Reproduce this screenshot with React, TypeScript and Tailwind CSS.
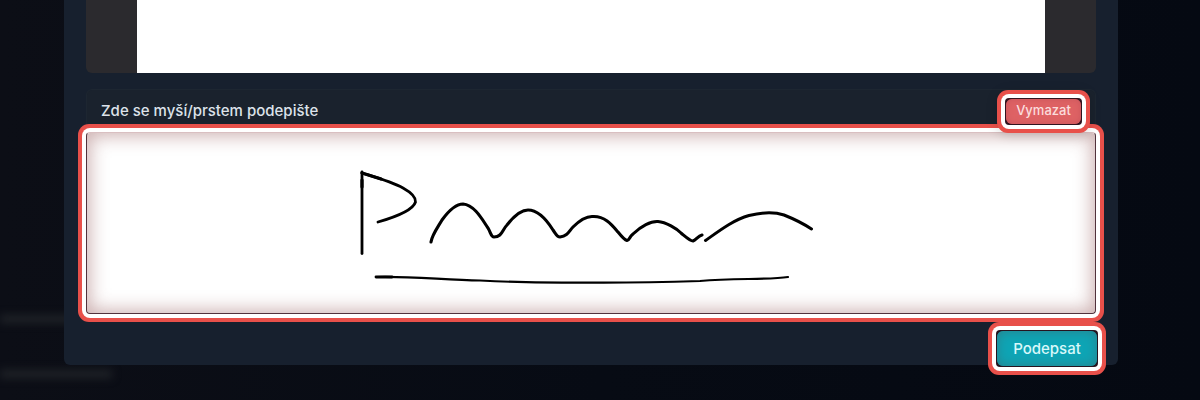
import { useState } from "react";

const strokes = [
  { d: "M362 253.500L362 199L362 172", w: 2.8 },
  { d: "M362 173C378 178 392 182 403 188C412 193 416 197 415.500 202C413 210 399 216 378 222", w: 2.8 },
  { d: "M362 173L381 179M362 180L362 187", w: 3.2 },
  { d: "M431 242C432 235 438 227 442 220C450 209 456 204 463 204C475 205 483 221 488 228C491 233 491 237 494 237C502 237 502 230 507 225C514 216 521 210 528 210C539 210 548 222 553 230C556 234 557 237 560 237C568 236 569 231 573 227C580 220 587 216 593 216.500C605 216 612 225 618 232C622 237 625 240 627 240.500C630 240 629 237 633 234C641 226 651 221 658 221.500C666 222 677 229 681 233C687 238 690 241 693 241C696 240 698 236 702 235", w: 3.1 },
  { d: "M705.500 240.500C719 231 733 220 749 215.500C763 212 775 212 784 215C794 219 804 224 811.500 229", w: 3 },
  { d: "M376 277C410 276 445 280 480 280.500C510 282 540 283 580 282.500C630 283 668 282 700 281C735 278 768 280 788 277", w: 2.2 },
  { d: "M376 277L392 277", w: 2.8 },
];

function Backdrop() {
  return (
    <div aria-hidden="true" className="absolute inset-0 bg-linear-to-r from-[#0c0e16] via-[#070b14] to-[#050912]">
      <div className="absolute top-[315px] left-0 h-2 w-20 bg-[#202328] blur-[4px]" />
      <div className="absolute top-[370px] left-0 h-2 w-28 bg-[#202328] blur-[4px]" />
    </div>
  );
}

export default function App() {
  const [signed, setSigned] = useState(true);
  return (
    <div className="relative min-h-screen overflow-hidden bg-[#070b14] font-[Inter,sans-serif]">
      <Backdrop />
      <main className="relative mr-[82px] ml-16 rounded-b-md bg-[#17202e] px-[22px]">
        <section aria-label="Dokument" className="rounded-b-md bg-[#2b2a2e] px-[51px]">
          <div className="h-[73px] bg-white" />
        </section>

        <section className="mt-4">
          <header className="flex h-[43px] items-center justify-between rounded-t-md border border-b-0 border-[#1d2631] bg-[#1a222d] pr-[13px] pl-[14px]">
            <h2 className="text-[15px] leading-5 font-medium text-[#dde2ea]">Zde se myší/prstem podepište</h2>
            <div className="relative z-10 rounded-sm bg-[#32141f] p-px shadow-[0_0_0_4px_white,0_0_0_8px_#e8504a,0_2px_12px_8px_#00000026]">
              <button
                type="button"
                onClick={() => setSigned(false)}
                className="flex h-[25px] w-[75px] items-center justify-center rounded-md bg-[#de6264] text-[13px] font-medium text-[#fbdcdc] shadow-[inset_0_0_6px_#c9565c]"
              >
                Vymazat
              </button>
            </div>
          </header>
          <div className="rounded-sm border border-[#51323c] border-t-[#d9bfc1] bg-white shadow-[0_0_0_4px_white,0_0_0_8px_#e8504a,inset_0_0_18px_3px_#7a303060]">
            <svg viewBox="87 133 1008 180" className="h-[180px] w-full" role="img" aria-label="Podpis">
              {signed &&
                strokes.map((s) => (
                  <path key={s.d} d={s.d} fill="none" stroke="#000" strokeWidth={s.w} strokeLinecap="round" strokeLinejoin="round" />
                ))}
            </svg>
          </div>
        </section>

        <footer className="-mr-[2px] flex justify-end pt-4">
          <div className="relative -mb-[2px] rounded-sm bg-[#26141f] p-px shadow-[0_0_0_4px_white,0_0_0_8px_#e8504a]">
            <button
              type="button"
              className="flex h-[35px] w-[100px] items-center justify-center rounded-md bg-[#0ea5b5] pt-px text-[15px] font-medium text-[#d8f8fa] shadow-[inset_0_0_12px_#2c7f8a]"
            >
              Podepsat
            </button>
          </div>
        </footer>
      </main>
    </div>
  );
}
